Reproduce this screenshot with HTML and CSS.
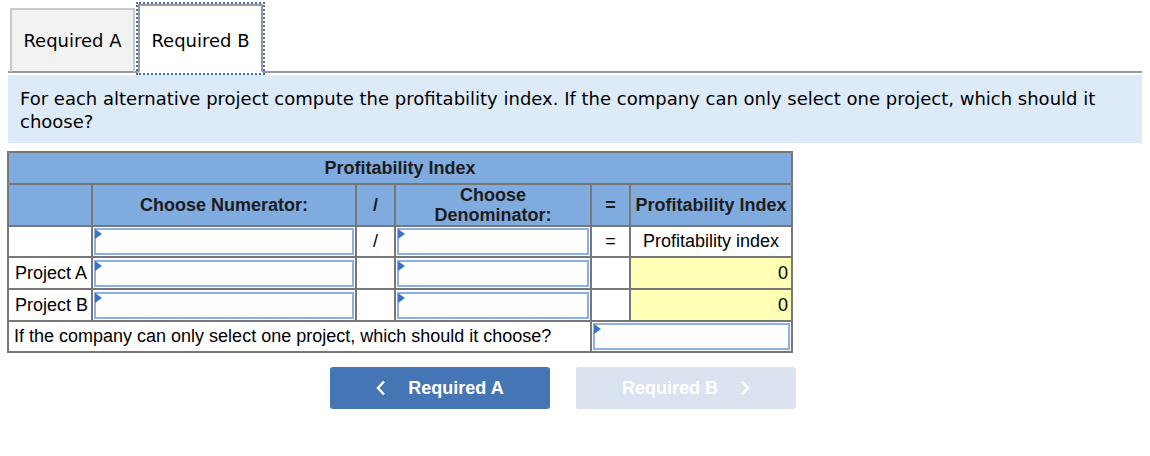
FILE: index.html
```html
<!DOCTYPE html>
<html lang="en">

<head>
  <meta charset="UTF-8" />
  <title>Profitability Index</title>
  <link rel="stylesheet" href="styles.css">
</head>

<body>
  <div class="tabs">
    <button class="tab">Required A</button>
    <button class="tab tab-active">Required B</button>
  </div>

  <div class="question">
    For each alternative project compute the profitability index. If the company can only select one project, which should it choose?
  </div>

  <table class="pi-table">
    <colgroup>
      <col class="c-label">
      <col class="c-num">
      <col class="c-op">
      <col class="c-den">
      <col class="c-op">
      <col class="c-result">
    </colgroup>
    <tr class="head-row">
      <th colspan="6">Profitability Index</th>
    </tr>
    <tr class="head-row sub-head">
      <th></th>
      <th>Choose Numerator:</th>
      <th>/</th>
      <th>Choose<br>Denominator:</th>
      <th>=</th>
      <th>Profitability Index</th>
    </tr>
    <tr class="row-top">
      <td></td>
      <td class="input-cell"><div class="entry"></div></td>
      <td class="op">/</td>
      <td class="input-cell"><div class="entry"></div></td>
      <td class="op">=</td>
      <td class="center">Profitability index</td>
    </tr>
    <tr>
      <td class="label">Project A</td>
      <td class="input-cell"><div class="entry"></div></td>
      <td></td>
      <td class="input-cell"><div class="entry"></div></td>
      <td></td>
      <td class="calc">0</td>
    </tr>
    <tr>
      <td class="label">Project B</td>
      <td class="input-cell"><div class="entry"></div></td>
      <td></td>
      <td class="input-cell"><div class="entry"></div></td>
      <td></td>
      <td class="calc">0</td>
    </tr>
    <tr class="row-last">
      <td colspan="4" class="choose-text">If the company can only select one project, which should it choose?</td>
      <td colspan="2" class="input-cell"><div class="entry"></div></td>
    </tr>
  </table>

  <div class="nav-buttons">
    <button class="nav-button nav-prev">
      <svg class="chev" width="10" height="16" viewBox="0 0 10 16"><path d="M8 1.5 L2 8 L8 14.5" fill="none" stroke="#fff" stroke-width="2.4"/></svg>
      Required A
    </button>
    <button class="nav-button nav-next">
      Required B
      <svg class="chev" width="10" height="16" viewBox="0 0 10 16"><path d="M2 1.5 L8 8 L2 14.5" fill="none" stroke="#fff" stroke-width="2.4"/></svg>
    </button>
  </div>
</body>

</html>
```

FILE: styles.css
```css
* {
  box-sizing: border-box;
}

body {
  margin: 0;
  padding: 4px 8px 0 8px;
  background: #fff;
  color: #000;
  font-family: 'Liberation Sans', Arial, sans-serif;
}

.tabs {
  display: flex;
  align-items: flex-end;
  gap: 3px;
  padding-left: 2px;
  border-bottom: 2px solid #999;
  height: 69px;
}

.tab {
  height: 65px;
  width: 125px;
  margin-bottom: -2px;
  font-family: 'DejaVu Sans', Verdana, sans-serif;
  font-size: 18px;
  color: #000;
  background: #f2f2f2;
  border: 2px solid #c9c9c9;
  border-bottom: 2px solid #999;
  padding: 0;
  white-space: nowrap;
}

.tab-active {
  height: 69px;
  background: #fff;
  border: 2px solid #999;
  border-bottom: 2px solid #fff;
  outline: 2px dotted #3d6fbf;
  outline-offset: 0;
  padding: 3px 0 0 0;
}

.question {
  margin-top: 2px;
  background: #ddeaf8;
  font-family: 'DejaVu Sans', Verdana, sans-serif;
  font-size: 18px;
  line-height: 23px;
  padding: 12px 12px 10px 12px;
  height: 68px;
}

.pi-table {
  margin-top: 8px;
  margin-left: -1px;
  border-collapse: collapse;
  border: 2px solid #777;
  font-size: 18px;
  table-layout: fixed;
  width: 784px;
}

.c-label { width: 84px; }
.c-num { width: 264px; }
.c-op { width: 39px; }
.c-den { width: 196px; }
.c-result { width: 162px; }

.pi-table th,
.pi-table td {
  border: 2px solid #777;
  padding: 0;
}

.head-row th {
  background: #7fabde;
  color: #1c1c1c;
  font-weight: bold;
  height: 32px;
  text-align: center;
  line-height: 20px;
}

.sub-head th {
  height: 42px;
}

.pi-table td {
  height: 32px;
  padding: 0 3px;
  background: #fff;
  white-space: nowrap;
}

.pi-table .row-top td {
  height: 31px;
}

.pi-table .row-last td {
  height: 30px;
}

.pi-table td.input-cell {
  padding: 1px;
}

.entry {
  position: relative;
  height: 27px;
  border: 2px solid #8db0e2;
  background: #fff;
}

.entry::before {
  content: '';
  position: absolute;
  left: -1px;
  top: -1px;
  border-left: 7px solid #3a73c4;
  border-top: 5px solid transparent;
  border-bottom: 5px solid transparent;
}

.op,
.center {
  text-align: center;
}

.pi-table td.label {
  padding-left: 6px;
  padding-right: 0;
}

.calc {
  text-align: right;
  background: #ffffb5 !important;
}

.choose-text {
  padding-left: 5px !important;
}

.nav-buttons {
  display: flex;
  gap: 26px;
  margin-top: 14px;
  padding-left: 322px;
}

.nav-button {
  width: 220px;
  height: 42px;
  border: none;
  border-radius: 3px;
  color: #fff;
  font-family: 'Liberation Sans', Arial, sans-serif;
  font-weight: bold;
  font-size: 18px;
  display: flex;
  align-items: center;
  justify-content: center;
  gap: 22px;
}

.nav-prev {
  background: #4675b5;
}

.nav-next {
  background: #dae3ef;
}
```
